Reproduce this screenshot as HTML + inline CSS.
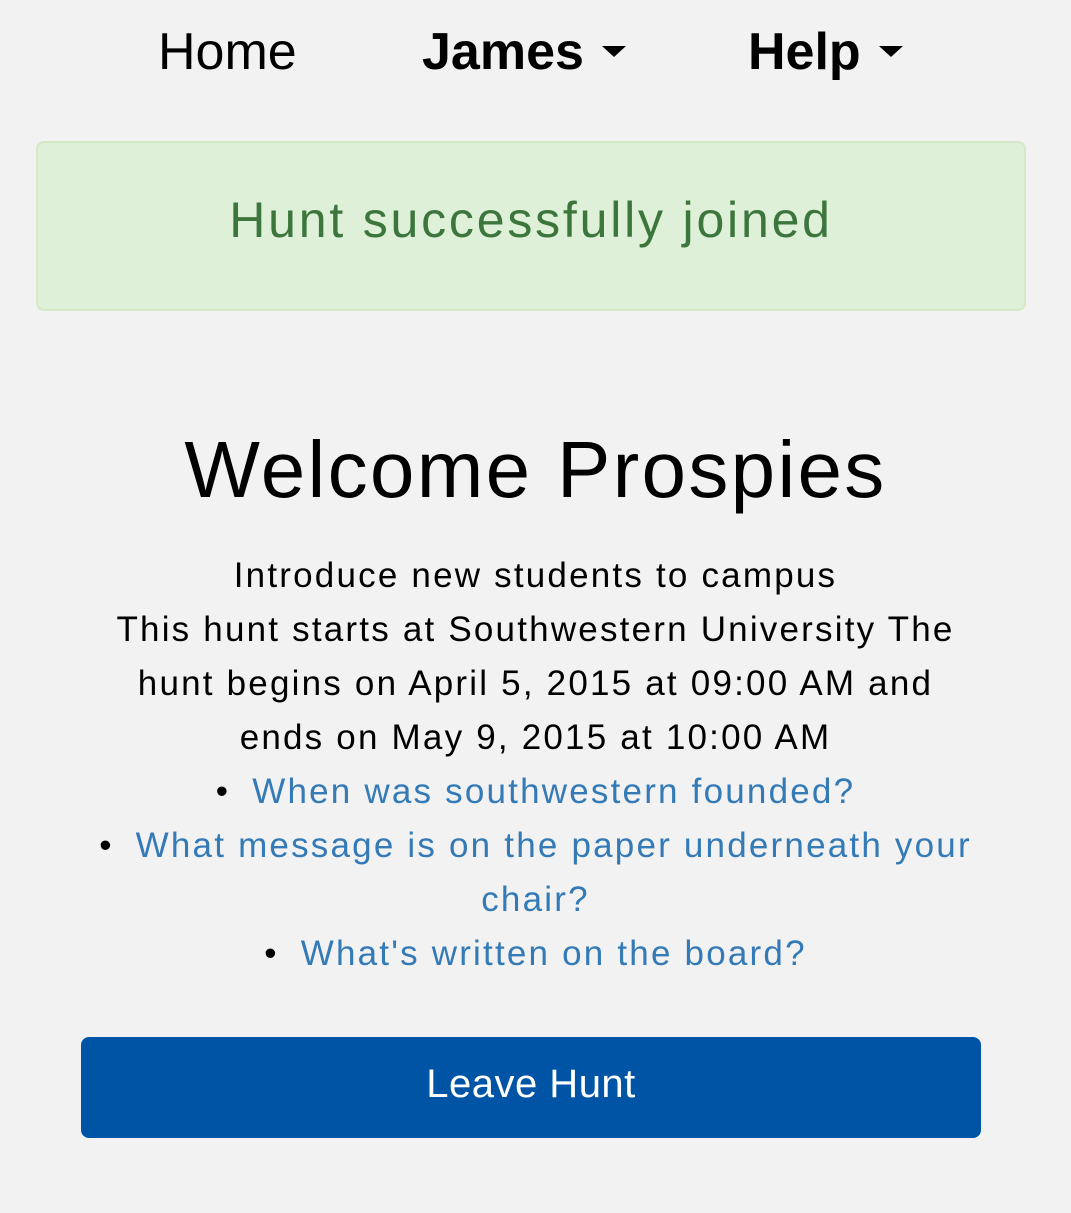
<!DOCTYPE html>
<html><head><meta charset="utf-8"><style>
body{margin:0;background:#f2f2f2;font-family:"Liberation Sans",sans-serif;width:1071px;height:1213px;overflow:hidden;position:relative}
.nav{position:absolute;top:20px;font-size:52px;line-height:64px;color:#000}
.caret{display:inline-block;width:0;height:0;border-left:12px solid transparent;border-right:12px solid transparent;border-top:11px solid #000;vertical-align:middle;margin-left:18px;position:relative;top:-4px}
.alert{position:absolute;left:36px;top:141px;width:986px;height:166px;background:#dff0d8;border:2px solid #d6e9c6;border-radius:8px;color:#3c763d;font-size:50px;text-align:center;line-height:154px;letter-spacing:2.8px}
h1{position:absolute;top:425px;left:0;width:1071px;margin:0;text-align:center;font-weight:normal;font-size:80px;line-height:90px;letter-spacing:2.3px}
.body{position:absolute;top:549px;left:0;width:1071px;text-align:center;font-size:35px;line-height:54px;letter-spacing:2.2px}
a{color:#337ab7;text-decoration:none}
.b{color:#000;margin-right:22px}
.btn{position:absolute;left:81px;top:1037px;width:900px;height:101px;background:#0054a6;border-radius:8px;color:#fff;text-align:center;line-height:94px;font-size:40px;letter-spacing:0.5px}
</style></head><body>
<div class="nav" style="left:158px">Home</div>
<div class="nav" style="left:422px;font-weight:bold">James<span class="caret"></span></div>
<div class="nav" style="left:748px;font-weight:bold">Help<span class="caret"></span></div>
<div class="alert">Hunt successfully joined</div>
<h1>Welcome Prospies</h1>
<div class="body">
Introduce new students to campus<br>
This hunt starts at Southwestern University The<br>
hunt begins on April 5, 2015 at 09:00 AM and<br>
ends on May 9, 2015 at 10:00 AM<br>
<span class="b">•</span><a>When was southwestern founded?</a><br>
<span class="b">•</span><a>What message is on the paper underneath your</a><br>
<a>chair?</a><br>
<span class="b">•</span><a>What's written on the board?</a>
</div>
<div class="btn">Leave Hunt</div>
</body></html>
